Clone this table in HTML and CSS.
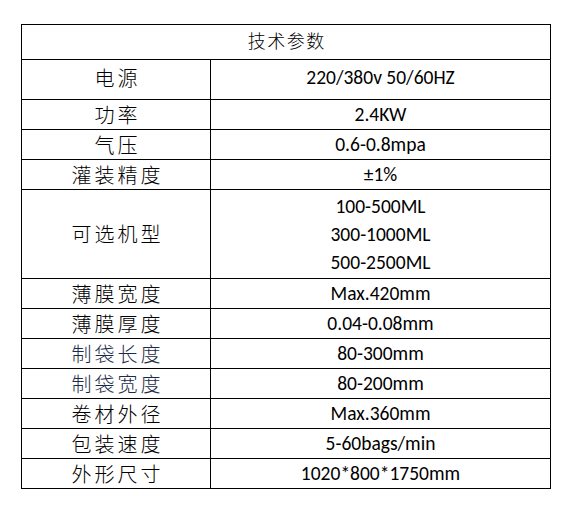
FILE: index.html
```html
<!DOCTYPE html>
<html lang="zh-CN">
<head>
<meta charset="utf-8">
<title>技术参数</title>
<link rel="stylesheet" href="styles.css">
</head>
<body>
<div class="spec">
  <div class="cell head">技术参数</div>

  <div class="cell label top">电源</div>
  <div class="cell value top">220/380v 50/60HZ</div>

  <div class="cell label">功率</div>
  <div class="cell value">2.4KW</div>

  <div class="cell label">气压</div>
  <div class="cell value">0.6-0.8mpa</div>

  <div class="cell label">灌装精度</div>
  <div class="cell value">±1%</div>

  <div class="cell label">可选机型</div>
  <div class="cell value multi">
    <span>100-500ML</span>
    <span>300-1000ML</span>
    <span>500-2500ML</span>
  </div>

  <div class="cell label">薄膜宽度</div>
  <div class="cell value">Max.420mm</div>

  <div class="cell label">薄膜厚度</div>
  <div class="cell value">0.04-0.08mm</div>

  <div class="cell label blue">制袋长度</div>
  <div class="cell value">80-300mm</div>

  <div class="cell label blue">制袋宽度</div>
  <div class="cell value">80-200mm</div>

  <div class="cell label">卷材外径</div>
  <div class="cell value">Max.360mm</div>

  <div class="cell label">包装速度</div>
  <div class="cell value">5-60bags/min</div>

  <div class="cell label">外形尺寸</div>
  <div class="cell value">1020*800*1750mm</div>
</div>
</body>
</html>
```

FILE: styles.css
```css
html, body {
  margin: 0;
  padding: 0;
  background: #ffffff;
}

body {
  color: #000000;
  font-family: "Noto Sans CJK SC", sans-serif;
}

.spec {
  margin: 24px 0 0 21px;
  width: 528px;
  display: grid;
  grid-template-columns: 188px 339px;
  grid-template-rows: 34px 39px 29px 29px 29px 88px 29px 29px 29px 29px 29px 29px 29px;
  gap: 1px;
  padding: 1px;
  background: #000000;
}

.cell {
  background: #ffffff;
  display: flex;
  align-items: center;
  justify-content: center;
  line-height: 1;
  white-space: nowrap;
}

.head {
  grid-column: 1 / span 2;
  font-size: 18px;
  letter-spacing: 1.5px;
  padding: 0 0 4px 1.5px;
  font-weight: 300;
}

.label {
  font-family: "Noto Sans CJK SC", sans-serif;
  font-size: 20px;
  letter-spacing: 3px;
  padding-left: 3px;
  font-weight: 300;
}

.blue {
  color: #1b2a48;
}

.value {
  font-family: Carlito, Lato, "Noto Sans", sans-serif;
  font-size: 19.5px;
}

.top {
  align-items: flex-start;
  padding-top: 8px;
}

.multi {
  flex-direction: column;
  gap: 0;
}

.multi span {
  display: block;
  height: 28px;
  line-height: 28px;
}
```
